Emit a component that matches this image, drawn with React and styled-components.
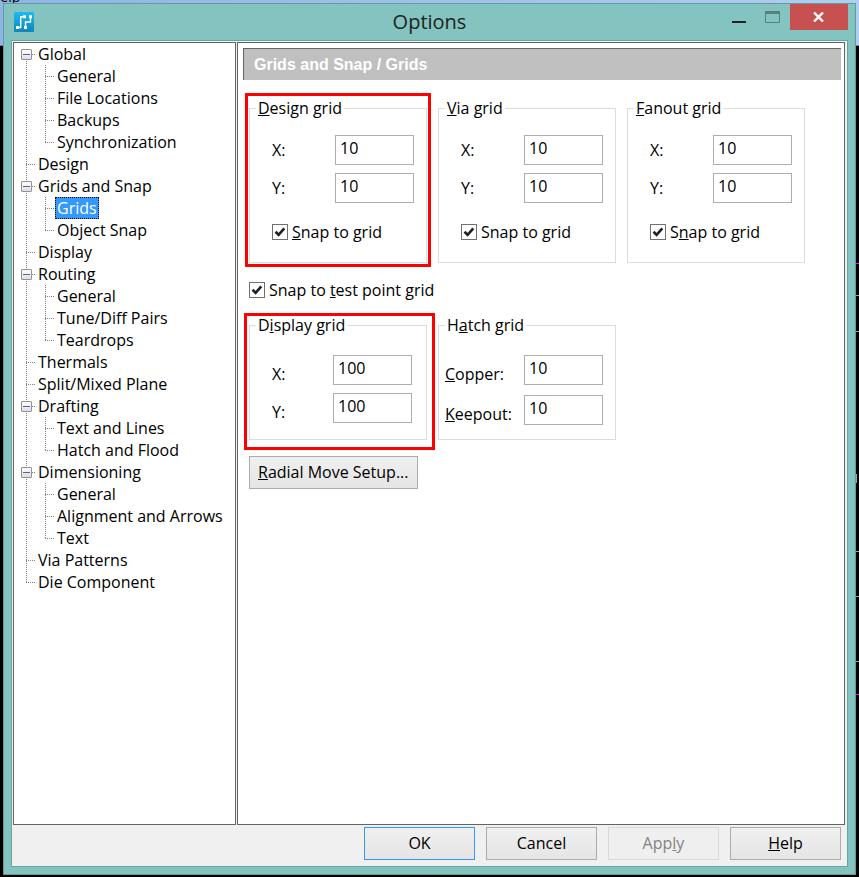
import { useState } from "react";
import styled, { createGlobalStyle, css } from "styled-components";

const GlobalStyle = createGlobalStyle`
  * {
    box-sizing: border-box;
  }
  body {
    margin: 0;
    background: #000000;
  }
  body, button, input {
    font-family: "Open Sans", "Noto Sans", sans-serif;
    font-size: 16px;
    line-height: 22px;
    color: #000000;
  }
`;

/* ---------- desktop behind the dialog ---------- */

const Desktop = styled.div`
  position: relative;
  display: flex;
  min-height: 100vh;
  padding: 3px 3px 2px;
  overflow: hidden;
  background: #000000;
`;

const AppStrip = styled.div`
  position: absolute;
  top: 0;
  left: 0;
  right: 0;
  height: 46px;
  background: linear-gradient(90deg, #8fb4e6, #b0cdf2);
  border-bottom: 1px solid #7d8086;
`;

const MenuWord = styled.span`
  position: absolute;
  top: -14px;
  left: -10px;
  font-size: 14px;
`;

const Traces = styled.svg`
  position: absolute;
  top: 0;
  right: 0;
  width: 3px;
  height: 877px;
`;

/* ---------- window frame ---------- */

const Window = styled.section`
  position: relative;
  flex: 1;
  display: flex;
  flex-direction: column;
  padding: 0 7px 7px;
  background: #83c4c0;
  border: 1px solid #659c98;
`;

const TitleBar = styled.header`
  display: grid;
  grid-template-columns: 1fr auto 1fr;
  height: 36px;
`;

const AppIcon = styled.svg`
  width: 20px;
  height: 20px;
  margin: 8px 0 0 3px;
`;

const Title = styled.h1`
  margin: 0;
  font-size: 20px;
  font-weight: 400;
  line-height: 36px;
  color: #222222;
`;

const WindowButtons = styled.div`
  display: flex;
  justify-content: flex-end;
  align-items: flex-start;
`;

const WindowButton = styled.button`
  display: flex;
  align-items: center;
  justify-content: center;
  width: ${(props) => (props.$close ? "58px" : "34px")};
  height: 26px;
  padding: 0;
  border: 0;
  color: #ffffff;
  background: ${(props) => (props.$close ? "#c75050" : "transparent")};
`;

const Client = styled.div`
  flex: 1;
  display: flex;
  flex-direction: column;
  padding: 1px 2px 0 1px;
  background: #f0f0f0;
  border: 1px solid #6ba5a0;
`;

const Panes = styled.div`
  flex: 1;
  display: flex;
  gap: 1px;
`;

/* ---------- tree ---------- */

const TreePane = styled.nav`
  width: 223px;
  background: #ffffff;
  border: 1px solid #646464;
`;

const dots = "#808080 0 1px, transparent 1px 2px";

const TreeRow = styled.div`
  display: flex;
  height: 22px;
  padding-left: 7px;
`;

const Guide = styled.span`
  display: flex;
  align-items: center;
  flex: none;
  width: ${(props) => (props.$wide ? "19px" : "15px")};
  background-repeat: no-repeat;
  ${(props) =>
    props.$line &&
    css`
      background-image: repeating-linear-gradient(180deg, ${dots});
      background-position: 5px 0;
      background-size: 1px ${props.$last ? "12px" : "100%"};
    `}
  ${(props) =>
    props.$line &&
    props.$branch &&
    css`
      background-image: repeating-linear-gradient(180deg, ${dots}),
        repeating-linear-gradient(90deg, ${dots});
      background-position: 5px ${props.$first ? "12px" : "0"}, 5px 11px;
      background-size: 1px ${props.$last ? "12px" : "100%"}, 9px 1px;
    `}
`;

const Toggle = styled.button`
  position: relative;
  width: 11px;
  height: 11px;
  padding: 0;
  background: linear-gradient(#ffffff, #dedede);
  border: 1px solid #919191;
  border-radius: 1px;

  &::after {
    content: "";
    position: absolute;
    top: 4px;
    left: 1px;
    width: 7px;
    height: 1px;
    background: #4b63a7;
  }
`;

const TreeLabel = styled.a`
  padding: 0 2px;
  color: #000000;
  text-decoration: none;
  white-space: nowrap;
  ${(props) =>
    props.$selected &&
    css`
      color: #ffffff;
      background: #3399ff;
      outline: 1px dotted #000000;
      outline-offset: -1px;
    `}
`;

/* ---------- settings ---------- */

const SettingsPane = styled.main`
  flex: 1;
  min-width: 0;
  padding: 5px 3px 5px 5px;
  background: #ffffff;
  border: 1px solid #646464;
`;

const Banner = styled.h2`
  margin: 0;
  padding-left: 10px;
  border-top: 1px solid #646464;
  border-left: 1px solid #646464;
  font-family: "Liberation Sans", Arial, sans-serif;
  font-size: 16px;
  font-weight: 700;
  line-height: 31px;
  color: #ffffff;
  background: #c0c0c0;
`;

const Settings = styled.form`
  display: flex;
  flex-direction: column;
  align-items: flex-start;
  padding: 17px 6px 0;
`;

const GroupRow = styled.div`
  display: grid;
  grid-template-columns: repeat(3, 178px);
  gap: 11px;
  margin-top: ${(props) => props.$top || 0}px;
`;

const Group = styled.fieldset`
  position: relative;
  min-width: 0;
  margin: 0;
  padding: 0 6px;
  border: 1px solid #dcdcdc;
`;

const Legend = styled.legend`
  padding: 0 2px;
`;

const GroupBody = styled.div`
  padding: ${(props) => (props.$low ? "19px 0 14px" : "16px 0 19px")};
  padding-left: ${(props) => props.$indent}px;
`;

const Fields = styled.div`
  display: grid;
  grid-template-columns: ${(props) => props.$labelWidth}px 79px;
  row-gap: ${(props) => props.$gap}px;
  align-items: ${(props) => (props.$low ? "end" : "center")};
`;

const Field = styled.input`
  width: 79px;
  height: 30px;
  padding: 0 4px 4px;
  border: 1px solid #abadb3;
  border-radius: 0;
  background: #ffffff;
`;

const CheckLabel = styled.label`
  display: flex;
  align-items: center;
  gap: 4px;
  margin-top: ${(props) => props.$top}px;
  white-space: nowrap;
`;

const tick = encodeURIComponent(
  '<svg xmlns="http://www.w3.org/2000/svg" viewBox="0 0 14 14"><path d="M2.5 6.8 L5.6 9.8 L11.3 3.3" fill="none" stroke="#212121" stroke-width="2.6"/></svg>'
);

const Checkbox = styled.input`
  appearance: none;
  width: 16px;
  height: 16px;
  margin: 0;
  border: 1px solid #707070;
  background: #ffffff;

  &:checked {
    background: #ffffff url("data:image/svg+xml,${tick}") center / 14px 14px
      no-repeat;
  }
`;

// red marker drawn round a group
const Highlight = styled.span`
  position: absolute;
  inset: ${(props) => props.$inset};
  border: 3px solid #ff0000;
  pointer-events: none;
`;

const PushButton = styled.button`
  min-width: 111px;
  height: 33px;
  padding: 0 8px 2px;
  border: 1px solid ${(props) => (props.$primary ? "#3399ff" : "#acacac")};
  background: linear-gradient(#f0f0f0, #e5e5e5);
  white-space: nowrap;

  &:disabled {
    color: #838383;
    border-color: #d9d9d9;
    background: #efefef;
  }
`;

const RadialButton = styled(PushButton)`
  margin-top: 16px;
`;

const Footer = styled.footer`
  display: flex;
  justify-content: flex-end;
  gap: 11px;
  padding: 2px 4px 6px;
`;

const tree = [
  { label: "Global", items: ["General", "File Locations", "Backups", "Synchronization"] },
  { label: "Design" },
  { label: "Grids and Snap", items: ["Grids", "Object Snap"] },
  { label: "Display" },
  { label: "Routing", items: ["General", "Tune/Diff Pairs", "Teardrops"] },
  { label: "Thermals" },
  { label: "Split/Mixed Plane" },
  { label: "Drafting", items: ["Text and Lines", "Hatch and Flood"] },
  { label: "Dimensioning", items: ["General", "Alignment and Arrows", "Text"] },
  { label: "Via Patterns" },
  { label: "Die Component" },
];

// "&" marks the access key, as in "&Design grid"
const KeyText = ({ text }) => {
  const at = text.indexOf("&");
  if (at < 0) return <span>{text}</span>;
  return (
    <span>
      {text.slice(0, at)}
      <u>{text[at + 1]}</u>
      {text.slice(at + 2)}
    </span>
  );
};

const TreeBranch = ({ node, first, last, selected, onSelect }) => {
  const [open, setOpen] = useState(true);
  const items = node.items || [];
  return (
    <>
      <TreeRow>
        <Guide $line $branch $first={first} $last={last}>
          {node.items && (
            <Toggle
              type="button"
              aria-label={`Toggle ${node.label}`}
              aria-expanded={open}
              onClick={() => setOpen(!open)}
            />
          )}
        </Guide>
        <TreeLabel href="#">{node.label}</TreeLabel>
      </TreeRow>
      {open &&
        items.map((item, i) => {
          const path = `${node.label}/${item}`;
          return (
            <TreeRow key={path}>
              <Guide $wide $line={!last} />
              <Guide $line $branch $last={i === items.length - 1} />
              <TreeLabel
                href="#"
                $selected={selected === path}
                onClick={() => onSelect(path)}
              >
                {item}
              </TreeLabel>
            </TreeRow>
          );
        })}
    </>
  );
};

const GridGroup = ({
  id,
  title,
  fields,
  snap,
  low,
  indent = 16,
  labelWidth = 63,
  gap = 8,
  highlight,
}) => (
  <Group>
    <Legend>
      <KeyText text={title} />
    </Legend>
    <GroupBody $low={low} $indent={indent}>
      <Fields $low={low} $labelWidth={labelWidth} $gap={gap}>
        {fields.map(([label, value], i) => [
          <label key={label} htmlFor={`${id}-${i}`}>
            <KeyText text={label} />
          </label>,
          <Field key={`${label}-field`} id={`${id}-${i}`} defaultValue={value} />,
        ])}
      </Fields>
      {snap && (
        <CheckLabel $top={18}>
          <Checkbox type="checkbox" defaultChecked />
          <KeyText text={snap} />
        </CheckLabel>
      )}
    </GroupBody>
    {highlight && <Highlight $inset={highlight} />}
  </Group>
);

const App = () => {
  const [selected, setSelected] = useState("Grids and Snap/Grids");
  return (
    <Desktop>
      <GlobalStyle />
      <AppStrip>
        <MenuWord>Help</MenuWord>
      </AppStrip>
      <Traces viewBox="0 0 3 877" aria-hidden="true">
        <path d="M0 263.5h3M0 694.5h3" stroke="#e815e8" />
        <path d="M0 295.5h3M0 331.5h3M0 551.5h3M0 596.5h3M0 661.5h3M0.5 474v9" stroke="#a0a0a0" />
      </Traces>

      <Window>
        <TitleBar>
          <AppIcon viewBox="0 0 20 20">
            <defs>
              <linearGradient id="iconFill" x1="0" y1="0" x2="0" y2="1">
                <stop offset="0" stopColor="#1fb9f4" />
                <stop offset="1" stopColor="#0d87b8" />
              </linearGradient>
            </defs>
            <rect width="20" height="20" rx="1" fill="url(#iconFill)" />
            <path
              d="M3.5 15.5H6.7V4.7H10.5M11.5 15.5V10H16.5V4.7"
              fill="none"
              stroke="#ffffff"
              strokeWidth="1.4"
            />
            <path
              d="M2 14h3v3h-3zM9 3.200h3v3h-3zM10 14h3v3h-3zM15 3.200h3v3h-3z"
              fill="#ffffff"
            />
          </AppIcon>
          <Title>Options</Title>
          <WindowButtons>
            <WindowButton type="button" aria-label="Minimize">
              <svg width="14" height="14">
                <path d="M0 12h14" stroke="#222222" strokeWidth="2" />
              </svg>
            </WindowButton>
            <WindowButton type="button" aria-label="Maximize">
              <svg width="16" height="12">
                <path d="M0.5 0.5h14v11h-14z" fill="none" stroke="#55807d" />
                <path d="M0 1.5h15" stroke="#55807d" strokeWidth="3" />
              </svg>
            </WindowButton>
            <WindowButton type="button" aria-label="Close" $close>
              <svg width="12" height="10">
                <path d="M1 0.5L10 9.5M10 0.5L1 9.5" stroke="#ffffff" strokeWidth="2.4" />
              </svg>
            </WindowButton>
          </WindowButtons>
        </TitleBar>

        <Client>
          <Panes>
            <TreePane>
              {tree.map((node, i) => (
                <TreeBranch
                  key={node.label}
                  node={node}
                  first={i === 0}
                  last={i === tree.length - 1}
                  selected={selected}
                  onSelect={setSelected}
                />
              ))}
            </TreePane>

            <SettingsPane>
              <Banner>Grids and Snap / Grids</Banner>
              <Settings>
                <GroupRow>
                  <GridGroup
                    id="design"
                    title="&Design grid"
                    fields={[["X:", "10"], ["Y:", "10"]]}
                    snap="&Snap to grid"
                    highlight="-26px -5px -5px"
                  />
                  <GridGroup
                    id="via"
                    title="&Via grid"
                    fields={[["X:", "10"], ["Y:", "10"]]}
                    snap="Snap to &grid"
                  />
                  <GridGroup
                    id="fanout"
                    title="&Fanout grid"
                    fields={[["X:", "10"], ["Y:", "10"]]}
                    snap="S&nap to grid"
                  />
                </GroupRow>
                <CheckLabel $top={16}>
                  <Checkbox type="checkbox" defaultChecked />
                  <KeyText text="Snap to &test point grid" />
                </CheckLabel>
                <GroupRow $top={13}>
                  <GridGroup
                    id="display"
                    title="D&isplay grid"
                    fields={[["X:", "100"], ["Y:", "100"]]}
                    low
                    labelWidth={61}
                    highlight="-23px -9px -11px -6px"
                  />
                  <GridGroup
                    id="hatch"
                    title="H&atch grid"
                    fields={[["&Copper:", "10"], ["&Keepout:", "10"]]}
                    low
                    indent={0}
                    labelWidth={79}
                    gap={10}
                  />
                </GroupRow>
                <RadialButton type="button">
                  <KeyText text="&Radial Move Setup..." />
                </RadialButton>
              </Settings>
            </SettingsPane>
          </Panes>

          <Footer>
            <PushButton type="button" $primary>OK</PushButton>
            <PushButton type="button">Cancel</PushButton>
            <PushButton type="button" disabled>
              <KeyText text="App&ly" />
            </PushButton>
            <PushButton type="button">
              <KeyText text="&Help" />
            </PushButton>
          </Footer>
        </Client>
      </Window>
    </Desktop>
  );
};

export default App;
